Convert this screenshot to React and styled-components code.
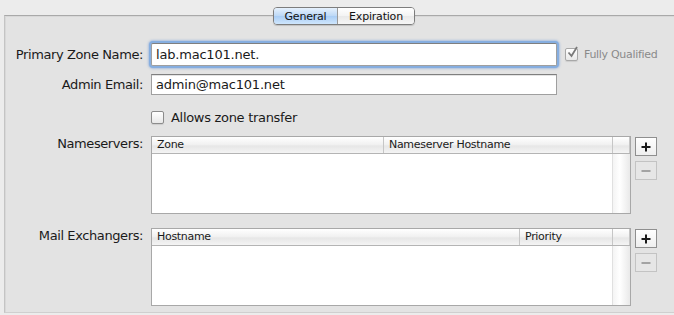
import React from 'react';
import styled, { createGlobalStyle } from 'styled-components';

const Global = createGlobalStyle`
  html, body {
    margin: 0;
    padding: 0;
    background: #ececec;
    overflow: hidden;
    font-family: "DejaVu Sans", "Liberation Sans", sans-serif;
    color: #1a1a1a;
  }
`;

const Page = styled.div`
  width: 674px;
  height: 315px;
  padding-top: 15px;
  box-sizing: border-box;
`;

const Panel = styled.div`
  margin-left: 4px;
  width: 690px;
  height: 298px;
  box-sizing: border-box;
  background: #e3e3e3;
  border-top: 1px solid #a9a9a9;
  border-left: 1px solid #c4c4c4;
  border-bottom: 1px solid #cfcfcf;
  box-shadow: inset 1px 1px 0 #d8d8d8;
`;

const TabRow = styled.div`
  display: flex;
  margin-top: -9px;
  padding-left: 268px;
`;

const Segments = styled.div`
  display: flex;
  height: 18px;
  box-sizing: border-box;
  border: 1px solid #7d7d7d;
  border-radius: 4px;
  overflow: hidden;
  box-shadow: 0 1px 1px rgba(0, 0, 0, 0.15);
`;

const Tab = styled.div`
  display: flex;
  align-items: center;
  justify-content: center;
  width: ${p => p.w}px;
  font-size: 11px;
  letter-spacing: -0.2px;
  color: #111;
  background: ${p => p.active
    ? 'linear-gradient(#e6f1fd, #bcd8f6 50%, #a9cdf5 51%, #cfe6fd)'
    : 'linear-gradient(#ffffff, #f3f3f3 50%, #e9e9e9 51%, #f6f6f6)'};
  & + & {
    border-left: 1px solid #9a9a9a;
  }
`;

const Form = styled.div`
  display: flex;
  flex-direction: column;
  padding-top: 18px;
`;

const Row = styled.div`
  display: flex;
  align-items: ${p => p.top ? 'flex-start' : 'center'};
  margin-top: ${p => p.mt || 0}px;
`;

const Label = styled.div`
  width: 138px;
  text-align: right;
  font-size: 13px;
  padding-right: 8px;
  padding-top: ${p => p.pt || 0}px;
  white-space: nowrap;
  letter-spacing: -0.4px;
`;

const Field = styled.div`
  width: 406px;
  height: ${p => p.focused ? 23 : 21}px;
  box-sizing: border-box;
  background: #fff;
  border: 1px solid #9f9f9f;
  border-top-color: #7f7f7f;
  font-size: 13px;
  display: flex;
  align-items: center;
  padding-left: 4px;
  box-shadow: ${p => p.focused ? '0 0 0 2px #86aee0, 0 0 2px 3px rgba(120,160,220,0.5)' : 'inset 0 1px 0 #e4e4e4'};
  border-radius: ${p => p.focused ? '2px' : '0'};
  letter-spacing: -0.2px;
`;

const Check = styled.label`
  display: flex;
  align-items: center;
  gap: ${p => p.small ? 6 : 7}px;
  font-size: ${p => p.small ? 11 : 13}px;
  letter-spacing: ${p => p.small ? -0.3 : -0.3}px;
  color: ${p => p.dim ? '#8a8a8a' : '#1a1a1a'};
  margin-left: ${p => p.ml || 0}px;
`;

const Box = styled.span`
  width: 13px;
  height: 13px;
  box-sizing: border-box;
  border: 1px solid ${p => p.dim ? '#a8a8a8' : '#8c8c8c'};
  border-radius: 2px;
  background: linear-gradient(#ffffff, #e8e8e8);
  box-shadow: 0 1px 1px rgba(0, 0, 0, 0.1);
  position: relative;
  display: flex;
  align-items: center;
  justify-content: center;
`;

const Table = styled.div`
  width: 480px;
  height: 78px;
  box-sizing: border-box;
  border: 1px solid #a8a8a8;
  background: #fff;
  display: flex;
  flex-direction: column;
`;

const Header = styled.div`
  display: flex;
  height: 16px;
  border-bottom: 1px solid #b4b4b4;
  background: linear-gradient(#ffffff, #f0f0f0 50%, #e6e6e6 55%, #f4f4f4);
`;

const HeadCell = styled.div`
  width: ${p => p.w}px;
  flex: ${p => p.w ? 'none' : 1};
  font-size: 11px;
  letter-spacing: -0.3px;
  padding-left: 5px;
  line-height: 16px;
  box-sizing: border-box;
  border-right: 1px solid #c6c6c6;
  white-space: nowrap;
`;

const Body = styled.div`
  flex: 1;
  display: flex;
`;

const Scroll = styled.div`
  margin-left: auto;
  width: 17px;
  border-left: 1px solid #e0e0e0;
  background: linear-gradient(90deg, #f4f4f4, #ffffff 40%, #e9e9e9);
`;

const Buttons = styled.div`
  display: flex;
  flex-direction: column;
  gap: 5px;
  margin-left: 4px;
  padding-top: 1px;
`;

const Square = styled.div`
  width: 22px;
  height: 19px;
  box-sizing: border-box;
  border: 1px solid ${p => p.off ? '#c3c3c3' : '#8f8f8f'};
  background: ${p => p.off ? '#e6e6e6' : 'linear-gradient(#ffffff, #efefef)'};
  display: flex;
  align-items: center;
  justify-content: center;
`;

const Plus = () => (
  <svg width="10" height="10" viewBox="0 0 10 10">
    <path d="M5 0.5v9M0.5 5h9" stroke="#1a1a1a" strokeWidth="2" />
  </svg>
);

const Minus = () => (
  <svg width="10" height="10" viewBox="0 0 10 10">
    <path d="M0.5 5h9" stroke="#a3a3a3" strokeWidth="2" />
  </svg>
);

const Tick = () => (
  <svg width="11" height="12" viewBox="0 0 11 12" style={{ position: 'absolute', left: 1, top: -3 }}>
    <path d="M1.5 6.5 L4.5 10 L10 1" fill="none" stroke="#7a7a7a" strokeWidth="1.8" />
  </svg>
);

const ListTable = ({ cols }) => (
  <Table>
    <Header>
      {cols.map((c, i) => <HeadCell key={i} w={c.w}>{c.name}</HeadCell>)}
      <HeadCell w={17} />
    </Header>
    <Body>
      <Scroll />
    </Body>
  </Table>
);

export default function App() {
  return (
    <Page>
      <Global />
      <Panel>
        <TabRow>
          <Segments>
            <Tab active w={63}>General</Tab>
            <Tab w={76}>Expiration</Tab>
          </Segments>
        </TabRow>
        <Form>
          <Row>
            <Label>Primary Zone Name:</Label>
            <Field focused>lab.mac101.net.</Field>
            <Check small dim ml={8}>
              <Box dim><Tick /></Box>
              Fully Qualified
            </Check>
          </Row>
          <Row mt={8}>
            <Label>Admin Email:</Label>
            <Field>admin@mac101.net</Field>
          </Row>
          <Row mt={15}>
            <Label />
            <Check>
              <Box />
              Allows zone transfer
            </Check>
          </Row>
          <Row top mt={11}>
            <Label pt={0}>Nameservers:</Label>
            <ListTable cols={[{ name: 'Zone', w: 232 }, { name: 'Nameserver Hostname', w: 229 }]} />
            <Buttons>
              <Square><Plus /></Square>
              <Square off><Minus /></Square>
            </Buttons>
          </Row>
          <Row top mt={14}>
            <Label pt={0}>Mail Exchangers:</Label>
            <ListTable cols={[{ name: 'Hostname', w: 368 }, { name: 'Priority', w: 93 }]} />
            <Buttons>
              <Square><Plus /></Square>
              <Square off><Minus /></Square>
            </Buttons>
          </Row>
        </Form>
      </Panel>
    </Page>
  );
}
